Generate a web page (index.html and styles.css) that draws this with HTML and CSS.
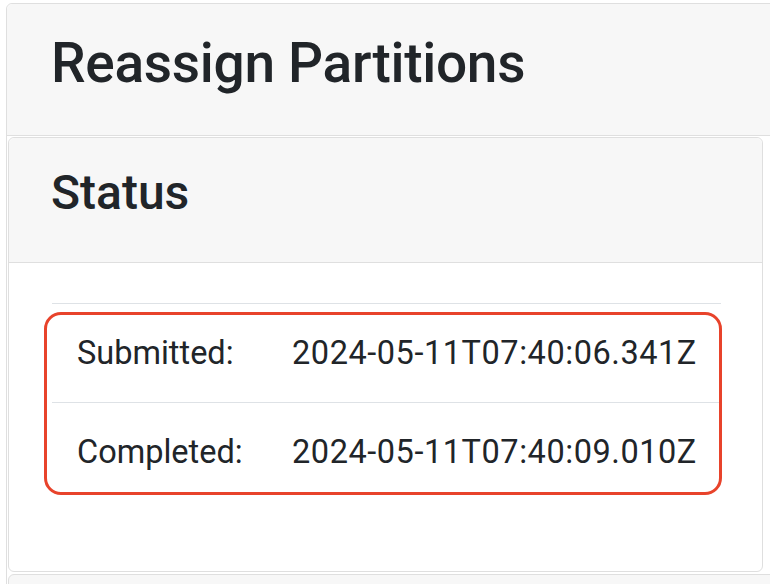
FILE: index.html
```html
<!DOCTYPE html>
<html>
<head>
<meta charset="utf-8">
<link rel="stylesheet" href="styles.css">
</head>
<body>
<div class="outer">
  <div class="outer-header"><h1 class="title">Reassign Partitions</h1></div>
  <div class="outer-body">
    <div class="card">
      <div class="card-header"><h3 class="subtitle">Status</h3></div>
      <div class="card-body">
        <div class="table-wrap">
          <div class="status-row"><div class="label">Submitted:</div><div class="value">2024-05-11T07:40:06.341Z</div></div>
          <div class="status-row"><div class="label">Completed:</div><div class="value">2024-05-11T07:40:09.010Z</div></div>
          <div class="highlight"></div>
        </div>
      </div>
    </div>
    <div class="card next"></div>
  </div>
</div>
</body>
</html>
```

FILE: styles.css
```css
html, body {
  margin: 0;
  padding: 0;
  background: #fff;
  overflow: hidden;
}
body {
  padding: 3px 0 0 6px;
  font-family: "Roboto", "Liberation Sans", Arial, sans-serif;
  color: #212529;
}
.outer {
  border: 1px solid #dfdfdf;
  border-radius: 6px;
  margin-right: -20px;
  background: #fff;
}
.outer-header {
  background: #f7f7f7;
  border-bottom: 1px solid #dfdfdf;
  border-radius: 6px 6px 0 0;
  padding: 26px 0 39px 44px;
}
.title {
  margin: 0;
  font-size: 55px;
  line-height: 66px;
  font-weight: 500;
  letter-spacing: -0.3px;
}
.outer-body {
  padding: 1px 0 0 1px;
}
.card {
  width: 753px;
  border: 1px solid #dfdfdf;
  border-radius: 6px;
  background: #fff;
}
.card-header {
  background: #f7f7f7;
  border-bottom: 1px solid #dfdfdf;
  border-radius: 6px 6px 0 0;
  padding: 26px 0 40px 42px;
}
.subtitle {
  margin: 0;
  font-size: 48px;
  line-height: 58px;
  font-weight: 500;
}
.card-body {
  padding: 40px 41px 70px 43px;
}
.table-wrap {
  position: relative;
}
.status-row {
  display: grid;
  grid-template-columns: 240px 1fr;
  border-top: 1px solid #dee2e6;
  padding: 25px 0;
  font-size: 32.5px;
  line-height: 48px;
  white-space: nowrap;
}
.status-row .label {
  padding-left: 25px;
}
.status-row .value {
  letter-spacing: 0.55px;
}
.highlight {
  position: absolute;
  left: -8px;
  top: 9px;
  width: 672px;
  height: 177px;
  border: 3px solid #e8432b;
  border-radius: 17px;
}
.card.next {
  margin-top: 2px;
  width: 900px;
  height: 40px;
  background: #f7f7f7;
}
```
